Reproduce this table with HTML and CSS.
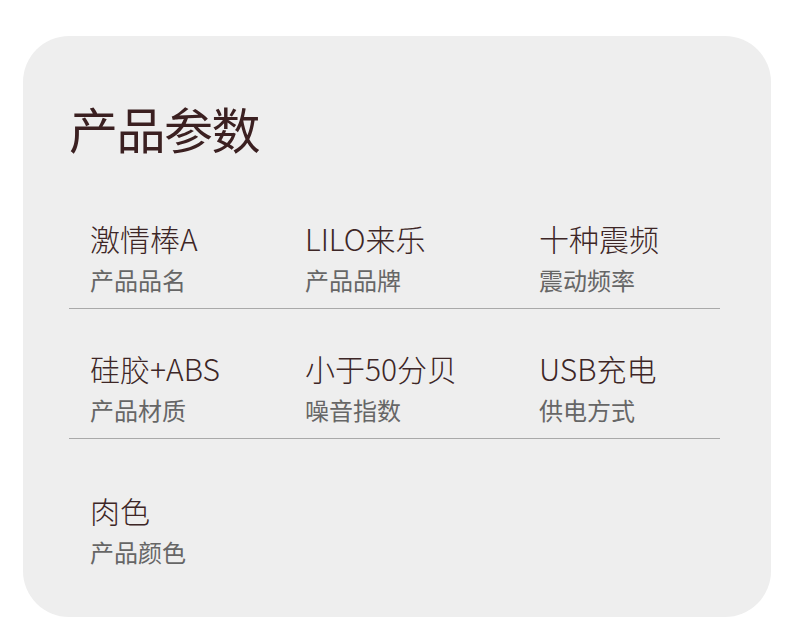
FILE: index.html
```html
<!DOCTYPE html>
<html lang="zh-CN">
<head>
<meta charset="utf-8">
<link rel="stylesheet" href="styles.css">
</head>
<body>
<div class="card">
  <h1 class="title">产品参数</h1>
  <div class="grid">
    <div class="row">
      <div class="cell"><div class="value">激情棒A</div><div class="label">产品品名</div></div>
      <div class="cell"><div class="value">LILO来乐</div><div class="label">产品品牌</div></div>
      <div class="cell"><div class="value">十种震频</div><div class="label">震动频率</div></div>
    </div>
    <div class="row">
      <div class="cell"><div class="value">硅胶+ABS</div><div class="label">产品材质</div></div>
      <div class="cell"><div class="value">小于50分贝</div><div class="label">噪音指数</div></div>
      <div class="cell"><div class="value">USB充电</div><div class="label">供电方式</div></div>
    </div>
    <div class="row last">
      <div class="cell"><div class="value">肉色</div><div class="label">产品颜色</div></div>
    </div>
  </div>
</div>
</body>
</html>
```
FILE: styles.css
```css
* { box-sizing: border-box; }
html, body { margin: 0; padding: 0; background: #ffffff; }
body {
  width: 790px;
  height: 631px;
  font-family: "Noto Sans CJK SC", "Noto Sans", sans-serif;
  padding: 36px 19px 0 23px;
}
.card {
  width: 748px;
  height: 581px;
  background: #eeeeee;
  border-radius: 46px;
  padding: 67px 51px 0 46px;
}
.title {
  margin: 0;
  font-size: 49px;
  line-height: 50px;
  font-weight: 400;
  color: #3b2021;
  letter-spacing: -1.5px;
}
.grid {
  margin-top: 70px;
}
.row {
  display: grid;
  grid-template-columns: 215px 234px 1fr;
  padding: 0 0 16px 21px;
  border-bottom: 1px solid #a9a9a9;
}
.row + .row { padding-top: 44px; }
.row.last { border-bottom: none; padding-top: 56px; }
.value {
  font-size: 30px;
  line-height: 30px;
  font-weight: 300;
  color: #3d2626;
  letter-spacing: 0;
}
.label {
  margin-top: 15px;
  font-size: 24px;
  line-height: 24px;
  font-weight: 400;
  color: #666666;
}
```
